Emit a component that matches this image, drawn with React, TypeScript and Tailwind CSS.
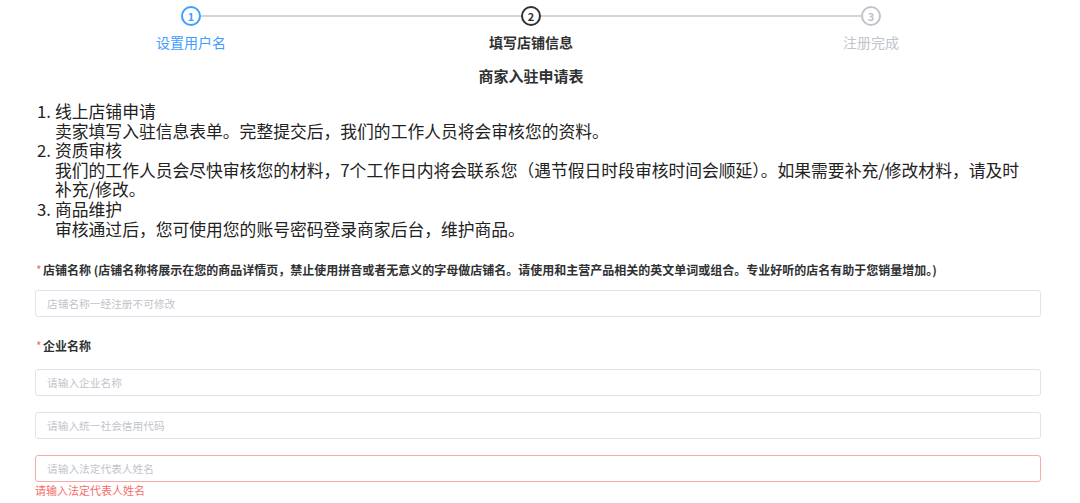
import React from "react";

const font = { fontFamily: '"Noto Sans CJK SC", "Noto Sans", sans-serif' };

function Step({ n, label, state, first, last }: { n: number; label: string; state: "done" | "active" | "wait"; first?: boolean; last?: boolean }) {
  const circle =
    state === "done"
      ? "border-[#409eff] text-[#409eff]"
      : state === "active"
      ? "border-[#303133] text-[#303133]"
      : "border-[#c0c4cc] text-[#c0c4cc]";
  const text =
    state === "done"
      ? "text-[#409eff]"
      : state === "active"
      ? "text-[#303133] font-bold"
      : "text-[#c0c4cc]";
  return (
    <div className="flex flex-col items-center">
      <div className="flex w-full items-center">
        <div className={`h-[2px] flex-1 ${first ? "bg-transparent" : "bg-[#d3d5da]"}`} />
        <div className={`flex h-[20px] w-[20px] items-center justify-center rounded-full border-2 text-[11px] font-bold leading-none ${circle}`}>
          {n}
        </div>
        <div className={`h-[2px] flex-1 ${last ? "bg-transparent" : "bg-[#d3d5da]"}`} />
      </div>
      <div className={`mt-[6px] text-[14px] leading-[20px] ${text}`}>{label}</div>
    </div>
  );
}

function Input({ placeholder, error }: { placeholder: string; error?: boolean }) {
  return (
    <div
      className={`flex h-[27px] w-[1006px] items-center rounded-[3px] border bg-white pl-[11px] text-[10.7px] text-[#c0c4cc] ${
        error ? "border-[#f9a9a9]" : "border-[#e1e3e8]"
      }`}
    >
      {placeholder}
    </div>
  );
}

function Label({ children }: { children: React.ReactNode }) {
  return (
    <div className="flex text-[12px] font-bold leading-[16px] text-[#303133]">
      <span className="w-[7px] font-normal text-[#f56c6c]">*</span>
      <span>{children}</span>
    </div>
  );
}

export default function App() {
  return (
    <div className="h-[503px] w-[1080px] overflow-hidden bg-white" style={font}>
      <div className="ml-[21px] grid w-[1020px] grid-cols-3 pt-[6px]">
        <Step n={1} label="设置用户名" state="done" first />
        <Step n={2} label="填写店铺信息" state="active" />
        <Step n={3} label="注册完成" state="wait" last />
      </div>

      <div className="ml-[21px] mt-[14px] w-[1020px] text-center text-[15px] font-bold leading-[20px] text-[#303133]">商家入驻申请表</div>

      <div className="ml-[37px] mt-[16px] text-[16.8px] leading-[19.6px] text-[#222]">
        <div className="flex">
          <span className="w-[18px] shrink-0">1.</span>
          <div>
            线上店铺申请
            <br />
            卖家填写入驻信息表单。完整提交后，我们的工作人员将会审核您的资料。
          </div>
        </div>
        <div className="flex">
          <span className="w-[18px] shrink-0">2.</span>
          <div>
            资质审核
            <br />
            我们的工作人员会尽快审核您的材料，7个工作日内将会联系您（遇节假日时段审核时间会顺延）。如果需要补充/修改材料，请及时
            <br />
            补充/修改。
          </div>
        </div>
        <div className="flex">
          <span className="w-[18px] shrink-0">3.</span>
          <div>
            商品维护
            <br />
            审核通过后，您可使用您的账号密码登录商家后台，维护商品。
          </div>
        </div>
      </div>

      <div className="ml-[36px] mt-[23px]">
        <Label>店铺名称 (店铺名称将展示在您的商品详情页，禁止使用拼音或者无意义的字母做店铺名。请使用和主营产品相关的英文单词或组合。专业好听的店名有助于您销量增加。)</Label>
      </div>
      <div className="ml-[35px] mt-[12px]">
        <Input placeholder="店铺名称一经注册不可修改" />
      </div>
      <div className="ml-[36px] mt-[21px]">
        <Label>企业名称</Label>
      </div>
      <div className="ml-[35px] mt-[15px] flex flex-col gap-[16px]">
        <Input placeholder="请输入企业名称" />
        <Input placeholder="请输入统一社会信用代码" />
        <div>
          <Input placeholder="请输入法定代表人姓名" error />
          <div className="text-[11px] leading-[16px] text-[#f56c6c]">请输入法定代表人姓名</div>
        </div>
      </div>
    </div>
  );
}
